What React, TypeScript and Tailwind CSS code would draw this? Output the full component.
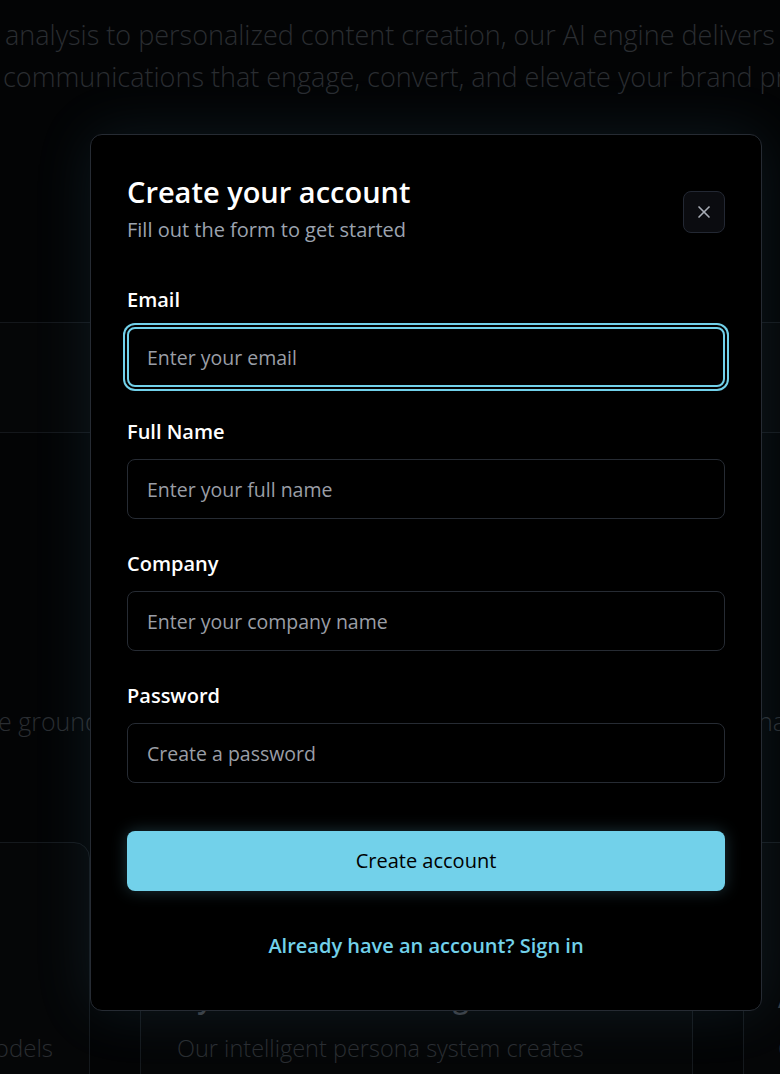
import React, { useState } from 'react';
import { X } from 'lucide-react';

const font = { fontFamily: '"Open Sans", "Noto Sans", sans-serif' };

function Field({
  label,
  placeholder,
  type = 'text',
  focused = false,
}: {
  label: string;
  placeholder: string;
  type?: string;
  focused?: boolean;
}) {
  return (
    <div className="flex flex-col">
      <label className="text-[20px] leading-[28px] font-semibold text-white">{label}</label>
      <input
        type={type}
        autoFocus={focused}
        placeholder={placeholder}
        className={
          focused
            ? 'mt-[13px] h-[60px] w-full rounded-lg border-2 border-[#72d1ea] bg-black px-[18px] text-[19.5px] text-white caret-white placeholder:text-[#9a9ea6] outline-none shadow-[0_0_0_2px_#000,0_0_0_4px_#72d1ea]'
            : 'mt-[13px] h-[60px] w-full rounded-lg border border-[#262b33] bg-black px-[19px] text-[19.5px] text-white placeholder:text-[#9a9ea6] outline-none'
        }
      />
    </div>
  );
}

export default function App() {
  const [open] = useState(true);

  return (
    <div className="relative h-[1074px] w-full overflow-hidden bg-[#030405]" style={font}>
      {/* page behind the dialog, dimmed */}
      <div className="flex flex-col text-[#2a2d31]">
        <div className="pt-[14px] text-[27px] leading-[42px] font-light whitespace-nowrap">
          <div className="pl-[5px]">analysis to personalized content creation, our AI engine delivers targeted</div>
          <div className="pl-[3px]">communications that engage, convert, and elevate your brand presence.</div>
        </div>

        <div className="mt-[224px] h-[111px] border-y border-[#14171b] bg-[#050607]" />

        <div className="mt-[270px] flex justify-between text-[25px] leading-[36px] font-light whitespace-nowrap">
          <span className="-ml-[2px]">e ground</span>
          <span className="-mr-[6px]">na</span>
        </div>

        <div className="mt-[103px] flex gap-[50px] -ml-[463px] whitespace-nowrap">
          <div className="w-[553px] shrink-0 h-[300px] rounded-2xl border border-[#15191d] bg-[#050607] px-[36px] pt-[137px]">
            <div className="text-[28px] leading-[34px] font-semibold text-[#3a3d42]">Multi-Model AI</div>
            <div className="mt-[17px] text-right text-[24px] leading-[34px] font-light">fine-tuned language models</div>
          </div>
          <div className="w-[553px] shrink-0 h-[300px] rounded-2xl border border-[#15191d] bg-[#050607] px-[36px] pt-[137px]">
            <div className="text-[28px] leading-[34px] font-semibold text-[#3a3d42]">Dynamic Persona Engine</div>
            <div className="mt-[17px] text-[23.5px] leading-[34px] font-light">Our intelligent persona system creates</div>
          </div>
          <div className="w-[553px] shrink-0 h-[300px] rounded-2xl border border-[#15191d] bg-[#050607] px-[34px] pt-[137px]">
            <div className="text-[28px] leading-[34px] font-semibold text-[#3a3d42]">Adaptive Campaigns</div>
            <div className="mt-[17px] text-[24px] leading-[34px] font-light">Campaigns that learn</div>
          </div>
        </div>
      </div>

      {open && (
        <div className="absolute inset-0 flex justify-start pl-[90px] pt-[134px]">
          <div className="h-[877px] w-[672px] rounded-xl border border-[#262b33] bg-black px-[36px] pt-[39px] shadow-[0_0_60px_rgba(90,170,210,0.12)]">
            <div className="flex items-center justify-between">
              <div>
                <h2 className="text-[29px] leading-[36px] font-semibold text-white">Create your account</h2>
                <p className="mt-[6px] text-[20px] leading-[28px] text-[#9ca3af]">Fill out the form to get started</p>
              </div>
              <button className="mt-[6px] flex h-[42px] w-[42px] items-center justify-center rounded-lg border border-[#232833] bg-[#0b0c10] text-[#a8adb6]">
                <X size={20} strokeWidth={2} />
              </button>
            </div>

            <div className="mt-[42px] flex flex-col gap-[31px]">
              <Field label="Email" placeholder="Enter your email" type="email" focused />
              <Field label="Full Name" placeholder="Enter your full name" />
              <Field label="Company" placeholder="Enter your company name" />
              <Field label="Password" placeholder="Create a password" type="password" />
            </div>

            <button className="mt-[48px] h-[60px] w-full rounded-lg bg-[#72d1ea] text-[20px] font-medium text-black shadow-[0_0_16px_rgba(114,209,234,0.25)]">
              Create account
            </button>

            <div className="mt-[41px] text-center">
              <a href="#" className="text-[20px] leading-[28px] font-semibold text-[#72d1ea]">
                Already have an account? Sign in
              </a>
            </div>
          </div>
        </div>
      )}
    </div>
  );
}
